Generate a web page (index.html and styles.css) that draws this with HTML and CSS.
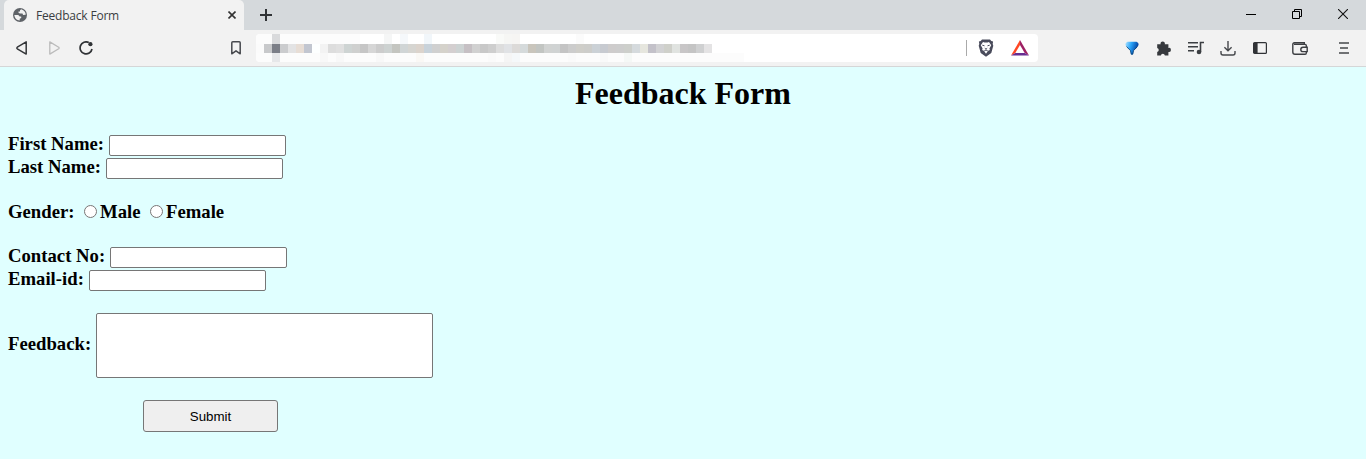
FILE: index.html
```html
<!DOCTYPE html>
<html lang="en">
<head>
<meta charset="utf-8">
<title>Feedback Form</title>
<link rel="stylesheet" href="styles.css">
</head>
<body>
<header class="tabs">
  <div class="tab">
    <svg class="globe" width="14" height="14" viewBox="0 0 14 14"><circle cx="7" cy="7" r="7" fill="#5f6368"/><path d="M8.2 1.3L7 2.2v1.2H5.5v1.4l1.5.6h2.5l.6 1.5 2.6-.2q.1-3.8-4.5-5.5zM1.3 7h3.9l1.5 1.5h1.5v1.6l-1.5.7v1.8Q1.9 12 1.3 7z" fill="#f2f2f2"/></svg>
    <span class="tab-title">Feedback Form</span>
    <svg width="8" height="8" viewBox="0 0 8 8"><path d="M.5.5l7 7m0-7l-7 7" stroke="#333" stroke-width="1.6"/></svg>
  </div>
  <svg class="plus" width="12" height="12" viewBox="0 0 12 12"><path d="M6 0v12M0 6h12" stroke="#303336" stroke-width="2"/></svg>
  <div class="window-controls">
    <svg width="10" height="10" viewBox="0 0 10 10"><path d="M0 5.5h10" stroke="#000"/></svg>
    <svg width="10" height="10" viewBox="0 0 10 10"><path d="M.5 2.5h7v7h-7zM2.5 2.5v-2h7v7h-2" fill="none" stroke="#000"/></svg>
    <svg width="10" height="10" viewBox="0 0 10 10"><path d="M0 0l10 10m0-10L0 10" stroke="#111" stroke-width="1.1"/></svg>
  </div>
</header>
<nav class="toolbar">
  <svg class="back" width="12" height="14" viewBox="0 0 12 14"><path d="M10.2.9v12.2L1.3 7.8Q.5 7 1.3 6.2z" fill="none" stroke="#343639" stroke-width="1.5" stroke-linejoin="round"/></svg>
  <svg class="forward" width="12" height="14" viewBox="0 0 12 14"><path d="M1.8.9v12.2l8.9-5.3q.8-.8 0-1.6z" fill="none" stroke="#bbb" stroke-width="1.3" stroke-linejoin="round"/></svg>
  <svg class="reload" width="15" height="14" viewBox="0 0 15 14"><path d="M9.8 1.5A6 6 0 1 0 13 8" fill="none" stroke="#303336" stroke-width="1.7"/><circle cx="11.4" cy="3.2" r="2.1" fill="#303336"/></svg>
  <svg class="bookmark" width="10" height="14" viewBox="0 0 10 14"><path d="M.8 12.8V1.8q0-1 1-1h6.4q1 0 1 1v11L5 9.8z" fill="none" stroke="#47494e" stroke-width="1.5" stroke-linejoin="round"/></svg>
  <div class="address">
    <svg class="mosaic" id="mosaic" width="488" height="28" viewBox="0 0 488 28" shape-rendering="crispEdges"></svg>
    <span class="divider"></span>
    <svg class="lion" width="16" height="18" viewBox="0 0 16 18"><path d="M4 .5h8L13.3 2l1.8.4L14.7 5l.6 1.8-2 7.2L8 17.8 2.7 14 .7 6.8 1.3 5 .9 2.4 2.7 2z" fill="#494b5b"/><path d="M5 3l1.5.5h3L11 3l2.2 3.2-1.8 3.2.5 1.5-1.8.8L8 14.7l-2.1-3-1.8-.8.5-1.5-1.8-3.2z" fill="#fff"/><path d="M4.3 6.2l2.2.6M11.7 6.2l-2.2.6M6.8 9.2L8 10.2l1.2-1M6.3 11.8L8 11l1.7.8" fill="none" stroke="#494b5b" stroke-width="1"/></svg>
    <svg class="bat" width="18" height="16" viewBox="0 0 18 16"><path d="M9 0L0 15.5l4.3-2.6L9 5z" fill="#ff4724"/><path d="M9 0v5l4.7 7.9 4.3 2.6z" fill="#9e1f63"/><path d="M0 15.5h18l-4.3-2.6H4.3z" fill="#662d91"/></svg>
  </div>
  <div class="extensions">
    <svg class="drop" width="14" height="14" viewBox="0 0 14 14"><defs><linearGradient id="blue" x1="0" x2="1" y2=".3"><stop stop-color="#b5e6ff"/><stop offset=".45" stop-color="#2aa5fa"/><stop offset="1" stop-color="#003c9d"/></linearGradient></defs><path d="M2.5.7h9Q14 1.8 13.6 4 12.5 6.3 8.6 9.6L8 13.5H6L5.4 9.6Q1.5 6.3.4 4 0 1.8 2.5.7z" fill="url(#blue)"/><path d="M1.5 5.5L5.4 9.5l.9 3.7h1.4l.9-3.7 3.9-4" fill="none" stroke="#073d70" stroke-width=".8"/></svg>
    <svg class="puzzle" width="15" height="15" viewBox="0 0 15 15"><path d="M1.2 3.3h3.4a2.2 2.2 0 1 1 4.2 0h3.6v3.6a2.1 2.1 0 1 1 0 4.1v3.5H8.9a2.1 2.1 0 0 0-4.1 0H1.2v-3.6a2 2 0 0 0 0-3.9z" fill="#36393d"/></svg>
    <svg class="music" width="16" height="14" viewBox="0 0 16 14"><path d="M0 1.7h10M0 5.7h10M0 9.7h6" stroke="#3b3e42" stroke-width="1.5"/><path d="M12.5 11V1.5H16" fill="none" stroke="#3b3e42" stroke-width="1.6"/><circle cx="11" cy="11" r="2.3" fill="#3b3e42"/></svg>
    <svg class="download" width="16" height="15" viewBox="0 0 16 15"><path d="M8 0v9.5M4.4 6.2L8 9.7l3.6-3.5M1 10v2q0 2 2 2h10q2 0 2-2v-2" fill="none" stroke="#46484c" stroke-width="1.4"/></svg>
    <svg class="panel" width="14" height="12" viewBox="0 0 14 12"><rect x=".6" y=".6" width="12.8" height="10.8" rx="1" fill="none" stroke="#303236" stroke-width="1.2"/><path d="M1 1h3.6v10H1z" fill="#303236"/></svg>
    <svg class="wallet" width="16" height="13" viewBox="0 0 16 13"><path d="M14.3 5V3.6q0-1.2-1.2-1.2H2M.8 2.2V10q0 2.2 2.2 2.2h10.1q1.2 0 1.2-1.2v-1M.8 2.4Q.8.8 2.5.8h9.8v1.6M15.2 5.2H11a2.2 2.2 0 0 0 0 4.4h4.2z" fill="none" stroke="#3c3e42" stroke-width="1.4"/></svg>
    <svg class="menu" width="10" height="12" viewBox="0 0 10 12"><path d="M0 1h10M1 6h8M0 11h10" stroke="#46484b" stroke-width="1.7"/></svg>
  </div>
</nav>
<main class="page">
  <h1 class="heading">Feedback Form</h1>
  <form class="form">
    <label class="row"><span class="caption">First Name: </span><input class="field" type="text"></label>
    <label class="row"><span class="caption">Last Name: </span><input class="field" type="text"></label>
    <div class="row gender"><span class="caption gender-label">Gender:</span>
      <label class="choice male"><input class="radio" type="radio" name="gender"><span class="caption">Male</span></label>
      <label class="choice"><input class="radio" type="radio" name="gender"><span class="caption">Female</span></label>
    </div>
    <label class="row"><span class="caption">Contact No: </span><input class="field" type="text"></label>
    <label class="row"><span class="caption">Email-id: </span><input class="field" type="text"></label>
    <label class="row feedback"><span class="caption">Feedback: </span><textarea class="message"></textarea></label>
    <button class="submit" type="button">Submit</button>
  </form>
</main>
<script src="mosaic.js"></script>
</body>
</html>
```
FILE: mosaic.js
```js
const colors = ("fbfbfb c8c9cb 7b7e87 cbccce e3e3e4 e7ddd5 c2c6d0 fdffff f3f3f3 dddddd e0e0e0 ced4d3 cfd0cf c6c6c6 d6d6d6 cccccc cdd2d1 c4c5c0 d0d5d6 d6d5d1 dbd3cc c8d2da d0d0d0 d5d2cb d4cfd0 cdd3d3 c6c0c4 d1d1d1 " +
 "c8c8c8 cecece dddddd e0e2e5 dcdad8 d5dadb c9c5bc c2c5c2 d1d3d2 d0d3d3 c4c4c4 cccccc cfcec9 cdcdca cbd1d6 c7cad0 cecccc cdcdcd cdcfcb d5dadd e6e6de c3c1c9 d2d2d4 cfd0ca e0e3e0 c8c6c7 c4c4c4 cfd0d1 e4e3e4").split(" ");
const svg = document.getElementById("mosaic");
function block(x, y, width, height, color) {
  const rect = document.createElementNS("http://www.w3.org/2000/svg", "rect");
  Object.entries({ x, y, width, height, fill: "#" + color }).forEach(([name, value]) => rect.setAttribute(name, value));
  svg.append(rect);
}
block(0, 0, 104, 10, "fcfcfc");
block(0, 19, 488, 9, "fcfcfc");
colors.forEach((color, i) => block(i * 8, 10, 8, 9, color));
[[16,"d9dadc"],[128,"f5f6f6"],[144,"f5f8fb"],[168,"f1f6fa"],[240,"f9faf8"],[248,"f6f6f4"],[256,"f6f5f3"],[320,"fbfbfb"]].forEach(([x, color]) => block(x, 0, 8, 10, color));
[[16,"e6e7e9"],[64,"f8f8f8"],[80,"f8f8f8"],[120,"f8f8f8"],[160,"faf8f5"],[232,"fafafa"],[248,"f5f5f5"],[256,"f5f8fa"],[312,"fafafa"],[344,"f9f9f9"],[368,"f5f8f6"]].forEach(([x, color]) => block(x, 19, 8, 9, color));
```
FILE: styles.css
```css
* { box-sizing: border-box; }
body { margin: 0; height: 459px; overflow: hidden; background: #e0ffff; }
svg { display: block; flex: none; }

.tabs { display: flex; height: 30px; background: #d5d9dc; padding-left: 4px; }
.tab { display: flex; align-items: center; width: 240px; padding: 0 8px 0 9px; border-radius: 5px 5px 0 0; background: #f2f2f2; }
.tab-title { flex: 1; margin-left: 9px; font: 12px "Open Sans", sans-serif; letter-spacing: -.2px; color: #3b3e42; }
.plus { margin: 9px 0 0 16px; }
.window-controls { display: flex; gap: 36px; margin: 9px 18px 0 auto; }

.toolbar { display: flex; align-items: center; height: 37px; padding-left: 16px; background: #f2f2f2; border-bottom: 1px solid #d5d6d7; }
.forward { margin-left: 20px; }
.reload { margin-left: 19px; }
.bookmark { margin-left: 137px; }
.address { display: flex; align-items: center; width: 782px; height: 28px; margin-left: 15px; border-radius: 4px; background: #fff; overflow: hidden; }
.divider { width: 1px; height: 16px; margin-left: 222px; background: #aaa; }
.lion { margin-left: 11px; }
.bat { margin-left: 17px; }
.extensions { display: flex; align-items: center; margin-left: 87px; }
.puzzle { margin-left: 17px; }
.music { margin-left: 17px; }
.download { margin-left: 16px; }
.panel { margin-left: 17px; }
.wallet { margin-left: 25px; }
.menu { margin-left: 31px; }

.page { padding: 8px; font-family: "Liberation Serif", "Times New Roman", serif; color: #000; }
.heading { height: 37px; margin: 0 0 22px; font-size: 32px; line-height: 37px; text-align: center; }
.form { font-size: 18.72px; font-weight: bold; }
.row { display: flex; align-items: center; height: 23px; white-space: pre; line-height: 21px; }
.caption { padding-bottom: 5px; }
.field { width: 177px; height: 21px; margin: 0; padding: 1px 2px; border: 1px solid #767676; border-radius: 2px; background: #fff; }
.gender { height: 22px; margin: 21px 0 23px; white-space: normal; }
.gender-label { width: 76px; }
.choice { display: flex; align-items: center; }
.choice .caption, .gender-label { padding-bottom: 2px; }
.male { width: 66px; }
.radio { width: 13px; height: 13px; margin: 0 3px 2px 0; }
.feedback { height: 65px; margin-top: 21px; }
.message { width: 337px; height: 65px; margin: 0; border: 1px solid #767676; border-radius: 2px; background: #fff; resize: none; }
.submit { display: block; width: 135px; height: 32px; margin: 22px 0 0 135px; border: 1px solid #767676; border-radius: 3px; background: #efefef; font: 13.333px "Liberation Sans", Arial, sans-serif; color: #000; }
```
